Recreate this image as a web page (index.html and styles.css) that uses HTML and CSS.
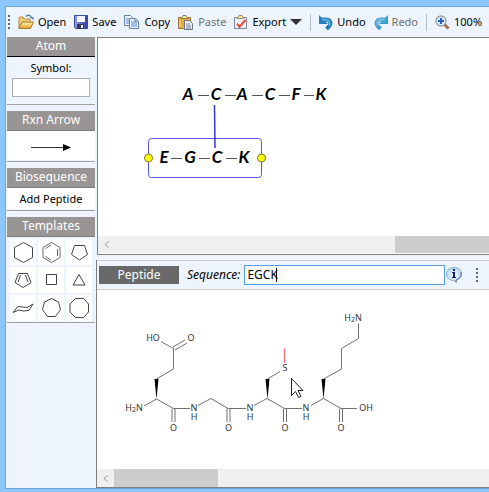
FILE: index.html
```html
<!DOCTYPE html>
<html lang="en">
<head>
<meta charset="utf-8">
<title>Structure Editor</title>
<link rel="stylesheet" href="styles.css">
</head>
<body>
<div class="window">
  <header class="toolbar">
    <span class="grip"></span>
    <button class="tool tool-open">
      <svg width="16" height="16" viewBox="0 0 16 16"><defs><linearGradient id="fold" x1="0" y1="0" x2="0" y2="1"><stop offset="0" stop-color="#fff0a8"/><stop offset="1" stop-color="#e3a02b"/></linearGradient></defs><path d="M1 14V4l1-1h3l1 2h6v9z" fill="#f0cf78" stroke="#b98a35"/><path d="M4 8h11.500l-3 6.500H1z" fill="url(#fold)" stroke="#a8752a"/><path d="M8 2.500c2-2 4.500-1.500 5.500 1" fill="none" stroke="#5a7da5" stroke-width="1.300"/><path d="M11.500 3h4v3z" fill="#5a7da5"/></svg>Open</button>
    <button class="tool tool-save">
      <svg width="14" height="14" viewBox="0 0 14 14"><defs><linearGradient id="disk"><stop offset="0" stop-color="#91a2ec"/><stop offset="1" stop-color="#343c9f"/></linearGradient></defs><path d="M.5.5h13v13h-12l-1-1z" fill="url(#disk)" stroke="#4049a0"/><path d="M3 1h8v6H3z" fill="#f3f6ff"/><path d="M3 9h7v5H3z" fill="#323856"/><path d="M7 10h2v3H7z" fill="#e9edfc"/></svg>Save</button>
    <button class="tool tool-copy">
      <svg width="16" height="14" viewBox="0 0 16 14"><g fill="#edf5ff" stroke="#6680ad"><path d="M.5.500h6l2 2v8h-8z"/><path d="M5.500 3.500h6l3 3v7h-9z"/></g><path d="M2 4h3M2 6h3M2 8h3M7 7h4M7 9h6M7 11h6" stroke="#5685cb"/><path d="M11 4v3h3" fill="#b4ccf2" stroke="#6680ad"/></svg>Copy</button>
    <button class="tool tool-paste muted">
      <svg width="16" height="15" viewBox="0 0 16 15"><path d="M.5 2.500h12v11H.5z" fill="#e5ac3b" stroke="#99733c"/><path d="M3 3.500 5 .5h3l2 3z" fill="#f9e69f" stroke="#8b794d"/><path d="M2 5v7" stroke="#ffe39a"/><path d="M6.500 5.500h5l3 3v6h-8z" fill="#e8edf5" stroke="#6b7586"/><path d="M8 9h4M8 11h5M8 13h5" stroke="#78869b"/></svg>Paste</button>
    <button class="tool tool-export">
      <svg width="14" height="15" viewBox="0 0 14 15"><path d="M.5 2.500h12v11H.5z" fill="#f0f3fb" stroke="#7b87a5"/><path d="M3 3.500 5 .5h3l2 3z" fill="#f7dda0" stroke="#a28b60"/><path d="M3 8.500 5.500 12 11.500 5" fill="none" stroke="#e34d32" stroke-width="2"/></svg>Export<span class="caret"></span></button>
    <span class="rule"></span>
    <button class="tool tool-undo">
      <svg width="14" height="15" viewBox="0 0 14 15"><path d="M2 4.500h5c4 0 5.500 3.500 3.500 6.500L7.500 14" fill="none" stroke="#2679b5" stroke-width="4"/><path d="M0 0v9h9z" fill="#2382bf"/><path d="M3 4.500h4c3.500 0 4.500 3.500 3 6" fill="none" stroke="#55afe2" stroke-width="2"/></svg>Undo</button>
    <button class="tool tool-redo muted">
      <svg width="14" height="15" viewBox="0 0 14 15"><path d="M12 4.500H7C3 4.500 1.500 8 3.500 11L6.500 14" fill="none" stroke="#4a9dcc" stroke-width="4"/><path d="M14 0v9H5z" fill="#419dcc"/><path d="M11 4.500H7c-3.500 0-4.500 3.500-3 6" fill="none" stroke="#7ac3e7" stroke-width="2"/></svg>Redo</button>
    <span class="rule"></span>
    <button class="tool tool-zoom">
      <svg width="15" height="15" viewBox="0 0 15 15"><path d="m9.500 9.500 4 4" stroke="#a46b42" stroke-width="3"/><circle cx="6" cy="6" r="5" fill="#dcecfb" stroke="#91a0b5" stroke-width="1.300"/><path d="M6 3v6M3 6h6" stroke="#235fc0" stroke-width="2"/></svg>100%</button>
  </header>

  <main class="workspace">
    <aside class="sidebar">
      <section class="group atom">
        <h2 class="bar">Atom</h2>
        <label class="symbol-label" for="symbol">Symbol:</label>
        <input class="symbol" id="symbol" type="text">
      </section>
      <section class="group">
        <h2 class="bar">Rxn Arrow</h2>
        <button class="arrow-button" aria-label="Reaction arrow"><svg width="40" height="8" viewBox="0 0 40 8"><path d="M0 4.500h34" stroke="#333"/><path d="M32 1v7l8-3.500z" fill="#000"/></svg></button>
      </section>
      <section class="group">
        <h2 class="bar">Biosequence</h2>
        <button class="peptide-button">Add Peptide</button>
      </section>
      <section class="group">
        <h2 class="bar">Templates</h2>
        <div class="templates">
          <button class="shape" aria-label="Cyclohexane"><svg viewBox="0 0 26 26"><path d="M13.500 3.500 22.500 8.500v10l-9 5-9-5v-10z"/></svg></button>
          <button class="shape" aria-label="Benzene"><svg viewBox="0 0 26 26"><path d="M13.500 3.500 22 8.500v10l-8.500 5-8.500-5v-10zM19.500 10v7M13 6 7.500 9.500M7.500 17.500 13 21" opacity=".8"/></svg></button>
          <button class="shape" aria-label="Cyclopentane"><svg viewBox="0 0 26 26"><path d="M8.500 6.500h10l3 9L13.500 21 5.500 15.500z"/></svg></button>
          <button class="shape" aria-label="Cyclopentadiene"><svg viewBox="0 0 26 26"><path d="M8.500 6.500h9l3.500 9-8 5-8-5zM10.500 8 8 15M15.500 8l2.500 7"/></svg></button>
          <button class="shape" aria-label="Cyclobutane"><svg viewBox="0 0 26 26"><path d="M8.500 7.500h10v10h-10z"/></svg></button>
          <button class="shape" aria-label="Cyclopropane"><svg viewBox="0 0 26 26"><path d="M13 7.500 19 18H7z"/></svg></button>
          <button class="shape" aria-label="Chair"><svg viewBox="0 0 26 26"><path d="m3 17.500 5-6 9 1 6-3.500-4 6.500-6 .5-4-1z"/></svg></button>
          <button class="shape" aria-label="Cycloheptane"><svg viewBox="0 0 26 26"><path d="m13.500 3.500 7 3.500 2 7.500-5 7h-8l-5-7 2-7.500z"/></svg></button>
          <button class="shape" aria-label="Cyclooctane"><svg viewBox="0 0 26 26"><path d="M9.500 3.500h8l5 5.500v8l-5 5.500h-8L4 17V9z"/></svg></button>
        </div>
      </section>
    </aside>

    <div class="panes">
      <section class="pane pane-top">
        <div class="canvas">
          <svg class="drawing" role="img">
            <g transform="translate(-98 -38)">
              <rect x="148.500" y="138.500" width="113" height="39" rx="3" fill="none" stroke="#5555ea"/>
              <path d="M214.500 105 215 148" stroke="#3535df" stroke-width="1.500"/>
              <path d="M198 95.500h11M225 95.500h11M252 95.500h11M279 95.500h11M304 95.500h10M171 158.500h11M199 158.500h11M226 158.500h11" stroke="#555"/>
              <g class="residues">
                <text x="188" y="100">A</text><text x="216" y="100">C</text><text x="242" y="100">A</text><text x="270" y="100">C</text><text x="296" y="100">F</text><text x="321" y="100">K</text>
                <text x="164" y="163">E</text><text x="190" y="163">G</text><text x="217" y="163">C</text><text x="244" y="163">K</text>
              </g>
              <g fill="#ff0" stroke="#777733"><circle cx="148.500" cy="158" r="4"/><circle cx="261.500" cy="158" r="4"/></g>
            </g>
          </svg>
        </div>
        <div class="scroll scroll-top"><svg class="chevron" viewBox="0 0 5 7"><path d="M4.500.5 1 3.500l3.500 3"/></svg><span class="thumb"></span></div>
      </section>

      <section class="pane pane-bottom">
        <div class="pane-head">
          <h2 class="tag">Peptide</h2>
          <label class="sequence-label" for="sequence">Sequence:</label>
          <div class="field"><input class="sequence" id="sequence" type="text" value="EGCK"><span class="text-caret"></span></div>
          <button class="info" aria-label="Information"><svg width="16" height="16" viewBox="0 0 16 16"><defs><radialGradient id="bub"><stop offset="0" stop-color="#fff"/><stop offset="1" stop-color="#b4d7f3"/></radialGradient></defs><path d="M8 .500c4.500 0 7.500 2.500 7.500 6.500 0 3-2 5-5 6v2.500L8 13.500C3.500 13.500.5 11 .5 7S3.500.500 8 .500z" fill="url(#bub)" stroke="#8aabc6"/><path d="M15 5v4l-3 3-2 1v2" fill="none" stroke="#527ba4"/><path d="M7 2h2v2H7zM6 5h3v5h1v1H6v-1h1V6H6z" fill="#101c80"/></svg></button>
          <span class="grip grip-end"></span>
        </div>
        <div class="canvas">
          <svg class="drawing" role="img">
            <g transform="translate(-97 -290)">
              <g class="bonds">
                <path d="M161 341.500 173.500 348.500V369L156.500 379M173 347l12-7M175 350l12-7M156.500 399 144 406M156.500 399l17 9.500H190M172 408.500V422M175 408.500V422"/>
                <path d="m198 405.500 13-7 17 10h18M227 408.500V422M230 408.500V422M254 405.500l13-7 17.500 10H302M283.500 408.500V422M286.500 408.500V422M267.500 379 280 371.500"/>
                <path d="m311 405.500 12.500-7 17.500 10h16M339.500 408.500V422M342.500 408.500V422M323.500 379 341.500 369V348.500L358.500 338.500V323.500"/>
              </g>
              <path d="M284.500 348.500V363" stroke="#f47b7b" stroke-width="1.500"/>
              <path d="m156.500 399-2-20h4zM267.500 399l-2-20h4zM323.500 399l-2-20h4z"/>
              <g class="atoms">
                <text x="153" y="341">HO</text><text x="191" y="341">O</text><text x="134" y="411">H<tspan class="sub" dy="1">2</tspan><tspan dy="-1">N</tspan></text><text x="173.500" y="431">O</text>
                <text x="194" y="411">N</text><text x="194" y="420">H</text><text x="228.500" y="431">O</text><text x="250" y="411">N</text><text x="250" y="420">H</text>
                <text x="285" y="371">S</text><text x="285" y="431">O</text><text x="306" y="411">N</text><text x="306" y="420">H</text><text x="341" y="431">O</text><text x="366" y="411">OH</text><text x="353" y="321">H<tspan class="sub" dy="1">2</tspan><tspan dy="-1">N</tspan></text>
              </g>
              <path d="M291.500 378.500v17l4-4 3 6 2.500-1-3-6h5z" fill="#fff" stroke="#222"/>
            </g>
          </svg>
        </div>
        <div class="scroll scroll-bottom"><svg class="chevron" viewBox="0 0 5 7"><path d="M4.500.5 1 3.500l3.500 3"/></svg><span class="thumb"></span></div>
      </section>
    </div>
  </main>
</div>
</body>
</html>
```
FILE: styles.css
```css
* { box-sizing: border-box; }
body {
  margin: 0;
  height: 100vh;
  padding: 6px 0 3px 5px;
  overflow: hidden;
  background: #8dc6fa;
  color: #000;
  font: 12px/16px "Noto Sans", "Open Sans", sans-serif;
}
button, input { font: inherit; color: inherit; margin: 0; }
button { border: 0; padding: 0; background: none; }
svg { display: block; flex: none; }
h2 { margin: 0; font: inherit; }
.window {
  display: flex;
  flex-direction: column;
  height: 100%;
  border: 1px solid #6fa6d5;
  border-right: 0;
  background: #edf4fd;
}
.toolbar {
  display: flex;
  flex: none;
  align-items: center;
  gap: 8px;
  height: 30px;
  padding-left: 2px;
  font-size: 11px;
}
.grip {
  flex: none;
  width: 2px;
  height: 14px;
  background: repeating-linear-gradient(#666 0 2px, transparent 2px 4px);
}
.tool { display: flex; flex: none; align-items: center; gap: 4px; white-space: nowrap; }
.muted { color: #707070; }
.caret { border: 6px solid transparent; border-top-color: #333; border-bottom: 0; }
.rule { flex: none; width: 1px; height: 17px; background: #b5bbc4; }
.workspace { display: flex; flex: 1; min-height: 0; }
.sidebar { flex: none; width: 90px; padding: 0 1px; }
.group { padding-bottom: 1px; margin-bottom: 6px; border-bottom: 1px solid #a0a0a4; }
.bar {
  height: 20px;
  line-height: 18px;
  text-align: center;
  color: #fff;
  background: #999595;
  border-bottom: 1px solid #7d7a7a;
}
.atom { padding-bottom: 7px; }
.atom .bar { border-bottom-color: #000; }
.symbol-label { display: block; padding: 5px 0 4px; font-size: 11px; line-height: 12px; text-align: center; }
.symbol { display: block; width: 78px; height: 19px; margin: 0 auto; border: 1px solid #abadb3; background: #fff; }
.arrow-button, .peptide-button { display: flex; align-items: center; justify-content: center; width: 100%; background: #fff; }
.arrow-button { height: 29px; padding-top: 2px; }
.peptide-button { height: 21px; font-size: 11px; }
.templates { display: grid; grid-template-columns: repeat(3, 26px); gap: 2px; padding: 2px 3px 0; }
.shape { height: 26px; background: #fff; }
.shape svg { width: 26px; height: 26px; fill: none; stroke: #444; }
.panes { display: flex; flex: 1; flex-direction: column; min-width: 0; }
.pane { display: flex; flex-direction: column; min-height: 0; background: #fff; border-left: 1px solid #808080; border-bottom: 1px solid #808080; }
.pane-top { flex: 217 1 0; margin: 0 0 5px 1px; border-top: 1px solid #808080; }
.pane-bottom { flex: 229 1 0; }
.canvas { flex: 1; min-height: 0; overflow: hidden; }
.drawing { width: 100%; height: 100%; }
.scroll { display: flex; flex: none; align-items: center; height: 18px; background: #f0f0f0; border-bottom: 1px solid #fff; }
.scroll-top .thumb { flex: 1; margin-left: 286px; }
.scroll-bottom { border-bottom: 0; }
.scroll-bottom .thumb { width: 104px; margin-left: 6px; }
.thumb { height: 100%; background: #cdcdcd; }
.chevron { width: 5px; height: 7px; margin-left: 6px; fill: none; stroke: #999; }
.pane-head {
  display: flex;
  flex: none;
  align-items: center;
  height: 30px;
  padding: 0 11px 0 2px;
  background: #edf4fd;
  border: solid #ccc;
  border-width: 1px 0;
}
.tag { width: 80px; height: 18px; line-height: 17px; text-align: center; color: #fff; background: #696969; }
.sequence-label { margin: 0 4px 0 8px; font-size: 12px; font-style: italic; }
.field { position: relative; flex: 1; min-width: 0; }
.sequence { display: block; width: 100%; height: 20px; padding: 0 2px; border: 1px solid #569de5; background: #fff; }
.text-caret { position: absolute; left: 32px; top: 3px; width: 1px; height: 14px; background: #000; }
.info { margin: 0 14px 0 1px; }
.residues { font: italic bold 17px Lato, sans-serif; text-anchor: middle; }
.bonds { fill: none; stroke: #707070; }
.atoms { font-size: 9px; line-height: 9px; text-anchor: middle; fill: #333; }
.sub { font-size: 7px; }
```
